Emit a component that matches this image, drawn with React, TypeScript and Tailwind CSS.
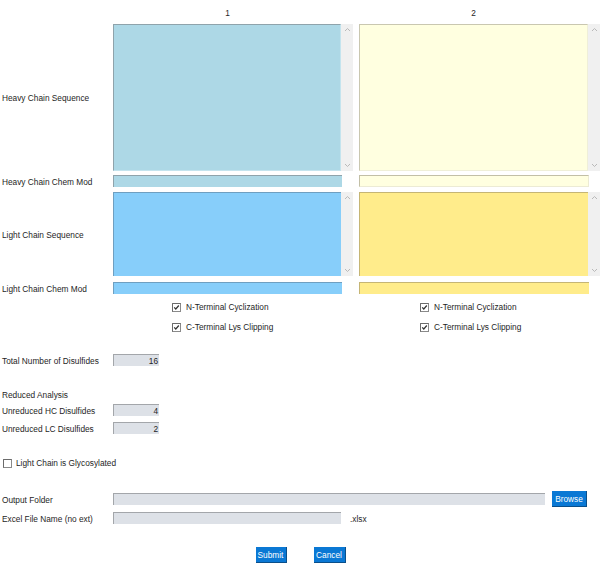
import type { ReactNode } from 'react'

function Chevron({ up }: { up?: boolean }) {
  return (
    <svg width="7" height="5" viewBox="0 0 7 5" className="block">
      <polyline
        points={up ? '1,4 3.5,1.5 6,4' : '1,1 3.5,3.5 6,1'}
        fill="none"
        stroke="#b9b9b9"
        strokeWidth="1"
      />
    </svg>
  )
}

function Scrollbar() {
  return (
    <div className="w-[12px] bg-[#f0f0f0] flex flex-col items-center justify-between py-[3px]">
      <Chevron up />
      <Chevron />
    </div>
  )
}

function CheckBox({ checked }: { checked?: boolean }) {
  return (
    <svg width="9" height="9" viewBox="0 0 9 9" className="block shrink-0">
      <rect x="0.5" y="0.5" width="8" height="8" fill="#fff" stroke="#8a8a8a" />
      <path d="M0.5 8.5 V0.5 H8.5" fill="none" stroke="#6b6b6b" />
      {checked && <path d="M2.2 4.3 L3.8 6 L6.8 2.5" fill="none" stroke="#333" strokeWidth="1.2" />}
    </svg>
  )
}

function Check({ label, checked }: { label: string; checked?: boolean }) {
  return (
    <div className="flex items-center gap-[5px] h-[20px]">
      <CheckBox checked={checked} />
      <span className="pt-[1px]">{label}</span>
    </div>
  )
}

function Row({ label, children, className }: { label?: string; children?: ReactNode; className?: string }) {
  return (
    <div className={`flex items-center ${className ?? ''}`}>
      <div className="w-[113px] shrink-0 pl-[2px] pt-[2px]">{label}</div>
      {children}
    </div>
  )
}

function NumBox({ value }: { value: string }) {
  return (
    <div className="w-[46px] h-[12px] bg-[#dde1e7] border-t border-l border-[#a3a6aa] text-right pr-[1px] pt-[1px] leading-[11px]">
      {value}
    </div>
  )
}

function BlueButton({ label, w }: { label: string; w: string }) {
  return (
    <div
      className={`${w} h-[16px] bg-[#0a78d4] text-white flex items-center justify-center pt-[1px] border-b border-r border-[#0a4f8a]`}
    >
      {label}
    </div>
  )
}

export default function App() {
  return (
    <div className="w-[600px] h-[573px] bg-white font-['Liberation_Sans',Arial,sans-serif] text-[8.3px] text-[#1e1e1e] leading-none">
      <div className="flex h-[24px] items-center pl-[113px]">
        <div className="w-[229px] text-center pt-[3px]">1</div>
        <div className="w-[17px]" />
        <div className="w-[229px] text-center pt-[3px]">2</div>
      </div>

      <Row label="Heavy Chain Sequence">
        <div className="flex w-[240px] h-[147px]">
          <div className="flex-1 bg-[#add8e6] border-t border-l border-[#8fa3ab] border-r border-b border-r-[#c4e4ee] border-b-[#c4e4ee]" />
          <Scrollbar />
        </div>
        <div className="flex w-[241px] h-[147px] ml-[6px]">
          <div className="flex-1 bg-[#ffffe0] border-t border-l border-[#c9c7b0] border-r border-b border-r-[#efefd8] border-b-[#efefd8]" />
          <Scrollbar />
        </div>
      </Row>

      <Row label="Heavy Chain Chem Mod" className="mt-[4px]">
        <div className="w-[229px] h-[12px] bg-[#add8e6] border-t border-l border-[#8fa3ab]" />
        <div className="w-[230px] h-[12px] ml-[17px] bg-[#ffffe0] border-t border-l border-[#c2bfa6] border-r border-b border-r-[#ecebd5] border-b-[#ecebd5]" />
      </Row>

      <Row label="Light Chain Sequence" className="mt-[5px]">
        <div className="flex w-[240px] h-[84px]">
          <div className="flex-1 bg-[#87cefa] border-t border-l border-[#6f9fc0]" />
          <Scrollbar />
        </div>
        <div className="flex w-[241px] h-[84px] ml-[6px]">
          <div className="flex-1 bg-[#ffec8b] border-t border-l border-[#c5b575]" />
          <Scrollbar />
        </div>
      </Row>

      <Row label="Light Chain Chem Mod" className="mt-[6px]">
        <div className="w-[229px] h-[12px] bg-[#87cefa] border-t border-l border-[#6f9fc0]" />
        <div className="w-[230px] h-[12px] ml-[17px] bg-[#ffec8b] border-t border-l border-[#c5b575]" />
      </Row>

      <div className="flex mt-[3px]">
        <div className="w-[172px]" />
        <div className="w-[248px]">
          <Check label="N-Terminal Cyclization" checked />
          <Check label="C-Terminal Lys Clipping" checked />
        </div>
        <div>
          <Check label="N-Terminal Cyclization" checked />
          <Check label="C-Terminal Lys Clipping" checked />
        </div>
      </div>

      <Row label="Total Number of Disulfides" className="mt-[17px]">
        <NumBox value="16" />
      </Row>

      <div className="mt-[22px] h-[12px] pl-[2px] pt-[2px] flex items-center">Reduced Analysis</div>

      <Row label="Unreduced HC Disulfides" className="mt-[4px]">
        <NumBox value="4" />
      </Row>
      <Row label="Unreduced LC Disulfides" className="mt-[6px]">
        <NumBox value="2" />
      </Row>

      <div className="mt-[23px] h-[12px] pl-[3px] flex items-center gap-[4px]">
        <CheckBox />
        <span className="pt-[1px]">Light Chain is Glycosylated</span>
      </div>

      <Row label="Output Folder" className="mt-[22px] h-[16px]">
        <div className="w-[432px] h-[12px] bg-[#dde1e7] border-t border-l border-[#a3a6aa]" />
        <div className="ml-[7px]">
          <BlueButton label="Browse" w="w-[35px]" />
        </div>
      </Row>

      <Row label="Excel File Name (no ext)" className="mt-[5px] h-[12px]">
        <div className="w-[228px] h-[12px] bg-[#dde1e7] border-t border-l border-[#a3a6aa]" />
        <span className="ml-[9px] pt-[2px]">.xlsx</span>
      </Row>

      <div className="mt-[23px] flex justify-center gap-[27px] pl-[1px]">
        <BlueButton label="Submit" w="w-[31px]" />
        <BlueButton label="Cancel" w="w-[32px]" />
      </div>
    </div>
  )
}
